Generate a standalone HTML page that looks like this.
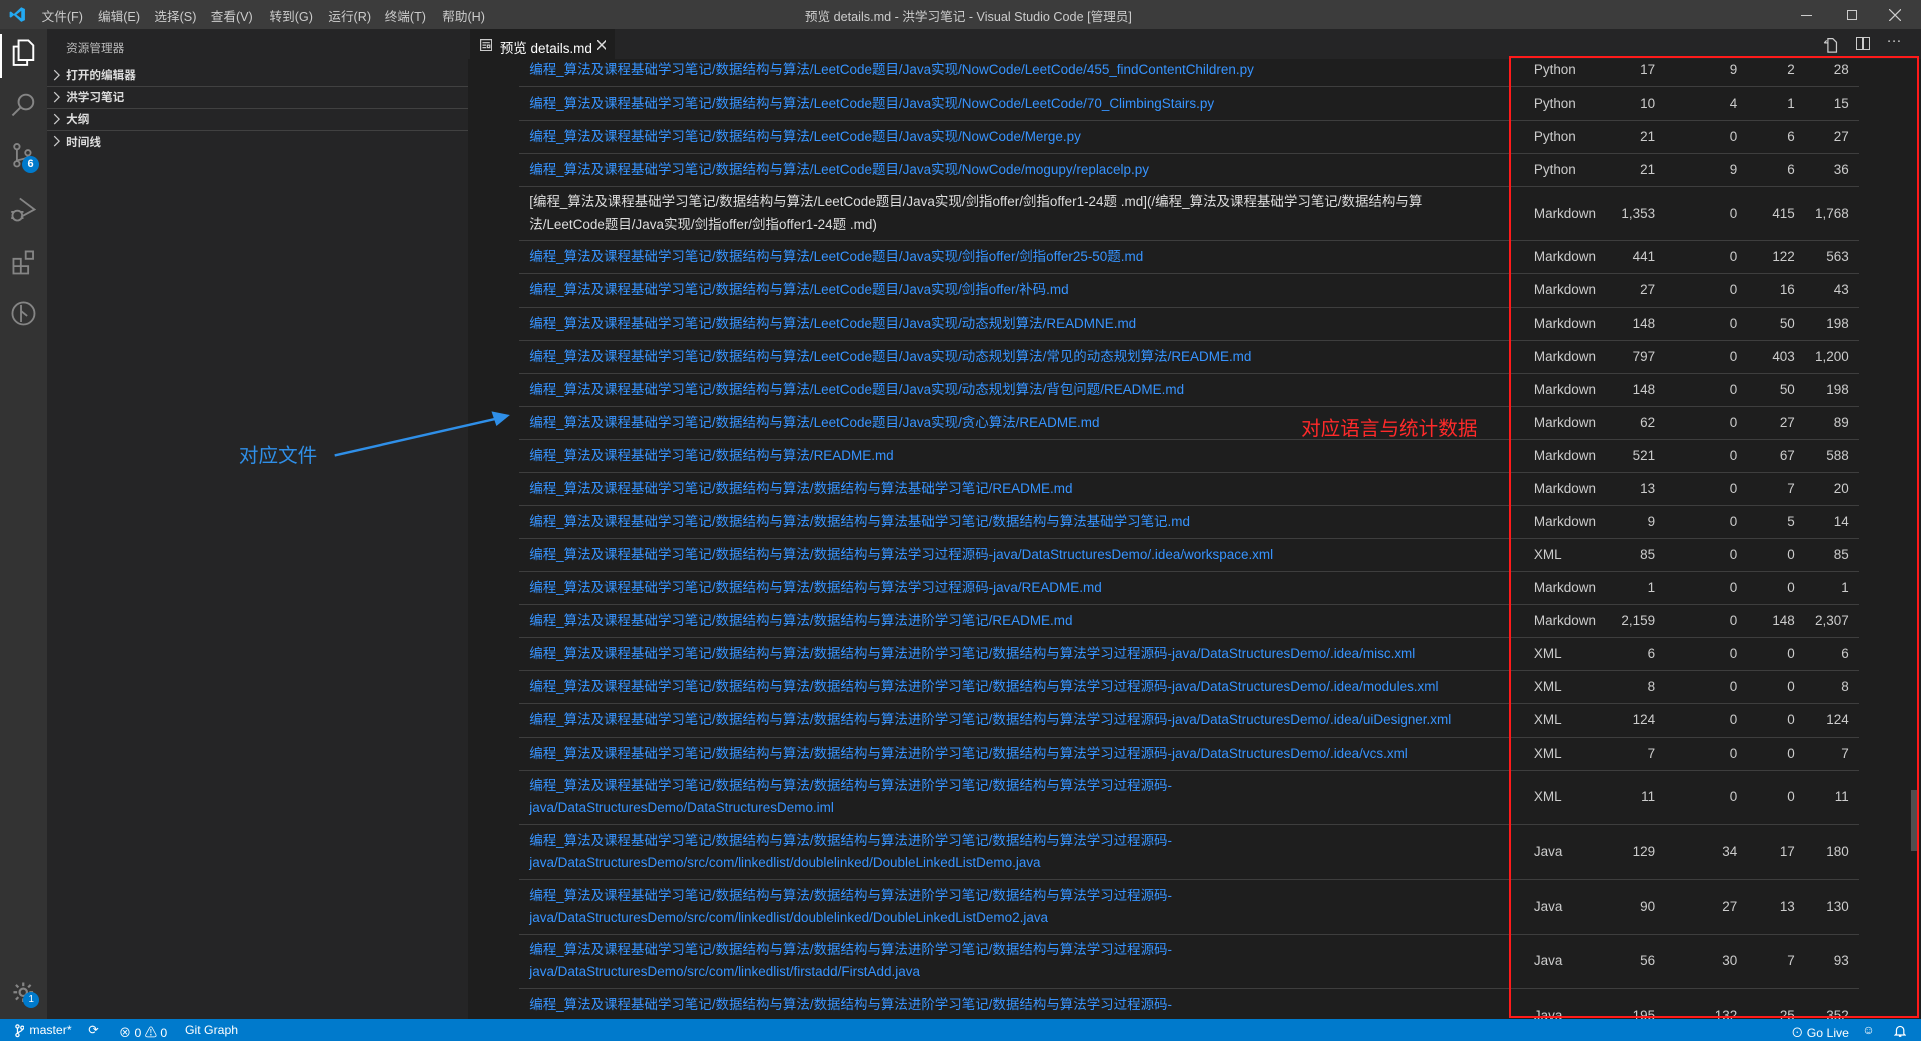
<!DOCTYPE html>
<html><head><meta charset="utf-8">
<style>
*{margin:0;padding:0;box-sizing:border-box}
html,body{width:1921px;height:1041px;overflow:hidden;background:#1e1e1e}
#w{position:relative;width:1568px;height:850px;zoom:1.22513;font-family:"Liberation Sans","Noto Sans CJK SC",sans-serif;color:#ccc;overflow:hidden}
.a{position:absolute}
#title{left:0;top:0;width:1568px;height:24px;background:#3c3c3c;font-size:10.3px;color:#ccc}
#title .m{position:absolute;top:5px}
#act{left:0;top:24px;width:38px;height:808px;background:#333}
#side{left:38px;top:24px;width:344px;height:808px;background:#252526;font-size:9.5px}
#tabs{left:382px;top:24px;width:1186px;height:24px;background:#252526}
#ed{left:382px;top:48px;width:1186px;height:784px;background:#1e1e1e;overflow:hidden}
table{position:absolute;left:42px;top:-4px;border-collapse:collapse;width:1093px;font-size:11px;table-layout:fixed}
td{border-bottom:1px solid #3e3e3e;height:27px;line-height:18px;padding:0 8px;white-space:nowrap;overflow:hidden}
td.p{color:#3794ff}
td.n{text-align:right}
tr.d td{height:44.6px}
#status{left:0;top:832px;width:1568px;height:18px;background:#007acc;color:#fff;font-size:10px}
#status span{position:absolute;top:3px}
.sec{position:absolute;left:0;width:344px;height:18px;color:#ddd;font-weight:bold}
.sec svg{position:absolute;left:5px;top:4px}
.sec i{position:absolute;left:16px;top:3px;font-style:normal}
.ln{position:absolute;left:0;width:344px;height:1px;background:#414141}
</style></head><body><div id="w">
<div id="title" class="a">
<svg class="a" style="left:7px;top:5px" width="14" height="14" viewBox="0 0 14 14"><path d="M10 1L13 2.5V11.5L10 13L4 7.5L1.5 9.5L0.5 9V5L1.5 4.5L4 6.5L10 1ZM10 4L6 7L10 10Z" fill="#23a9f2"/></svg>
<span class="m" style="left:34px">文件(F)</span><span class="m" style="left:80px">编辑(E)</span><span class="m" style="left:126px">选择(S)</span><span class="m" style="left:172px">查看(V)</span><span class="m" style="left:220px">转到(G)</span><span class="m" style="left:268px">运行(R)</span><span class="m" style="left:314px">终端(T)</span><span class="m" style="left:361px">帮助(H)</span>
<span class="m" style="left:657px">预览 details.md - 洪学习笔记 - Visual Studio Code [管理员]</span>
<div class="a" style="left:1470px;top:12px;width:9px;height:1px;background:#ccc"></div>
<div class="a" style="left:1508px;top:8px;width:8px;height:8px;border:1px solid #ccc"></div>
<svg class="a" style="left:1542px;top:7px" width="10" height="10" viewBox="0 0 10 10"><path d="M0 0L10 10M10 0L0 10" stroke="#ccc"/></svg>
</div>
<div id="act" class="a">
<div class="a" style="left:0;top:4px;width:2px;height:36px;background:#fff"></div>
<svg class="a" style="left:8px;top:7px" width="22" height="24" viewBox="0 0 22 24" fill="none" stroke="#fff" stroke-width="1.6"><path d="M7 2h8l4 4v12H7z"/><path d="M7 7H3v15h11v-4"/></svg>
<svg class="a" style="left:8px;top:50px" width="22" height="22" viewBox="0 0 22 22" fill="none" stroke="#858585" stroke-width="1.6"><circle cx="13" cy="9" r="6"/><path d="M9 13l-7 7"/></svg>
<svg class="a" style="left:10px;top:93px" width="22" height="22" viewBox="0 0 22 22" fill="none" stroke="#858585" stroke-width="1.5"><circle cx="4" cy="3" r="2.2"/><circle cx="13" cy="8" r="2.2"/><circle cx="4" cy="17" r="2.2"/><path d="M4 5v10M13 10c0 4-9 3-9 5"/></svg>
<div class="a" style="left:18px;top:103px;width:14px;height:14px;border-radius:7px;background:#007acc;color:#fff;font-size:9px;text-align:center;line-height:14px;font-weight:bold">6</div>
<svg class="a" style="left:8px;top:136px" width="22" height="22" viewBox="0 0 22 22" fill="none" stroke="#858585" stroke-width="1.5"><path d="M8 2l12 9-11 6"/><circle cx="6" cy="16" r="4"/><path d="M1 13h2M1 18h2M9 13h2M9 18h2"/></svg>
<svg class="a" style="left:9px;top:179px" width="22" height="22" viewBox="0 0 22 22" fill="none" stroke="#858585" stroke-width="1.5"><path d="M2 8h6v6H2zM2 14h6v6H2zM8 14h6v6H8zM12 2h6v6h-6z"/></svg>
<svg class="a" style="left:8px;top:221px" width="22" height="22" viewBox="0 0 22 22" fill="none" stroke="#858585" stroke-width="1.5"><circle cx="11" cy="11" r="9"/><path d="M9 4v14M9 9l5 4"/></svg>
<svg class="a" style="left:9px;top:776px" width="20" height="20" viewBox="0 0 20 20" fill="none" stroke="#858585" stroke-width="1.8"><circle cx="10" cy="10" r="3"/><path d="M10 2v3M10 15v3M2 10h3M15 10h3M4 4l2 2M14 14l2 2M4 16l2-2M14 6l2-2"/></svg>
<div class="a" style="left:19px;top:786px;width:13px;height:13px;border-radius:7px;background:#007acc;color:#fff;font-size:8px;text-align:center;line-height:13px">1</div>
</div>
<div id="side" class="a">
<span class="a" style="left:16px;top:9px;color:#bbb">资源管理器</span>
<div class="sec" style="top:28px"><svg width="6" height="10" viewBox="0 0 6 10"><path d="M1 1l4 4-4 4" stroke="#ccc" fill="none"/></svg><i>打开的编辑器</i></div>
<div class="ln" style="top:46px"></div>
<div class="sec" style="top:46px"><svg width="6" height="10" viewBox="0 0 6 10"><path d="M1 1l4 4-4 4" stroke="#ccc" fill="none"/></svg><i>洪学习笔记</i></div>
<div class="ln" style="top:64px"></div>
<div class="sec" style="top:64px"><svg width="6" height="10" viewBox="0 0 6 10"><path d="M1 1l4 4-4 4" stroke="#ccc" fill="none"/></svg><i>大纲</i></div>
<div class="ln" style="top:82px"></div>
<div class="sec" style="top:82px"><svg width="6" height="10" viewBox="0 0 6 10"><path d="M1 1l4 4-4 4" stroke="#ccc" fill="none"/></svg><i>时间线</i></div>
</div>
<div id="tabs" class="a">
<div class="a" style="left:2px;top:0;width:118px;height:24px;background:#1e1e1e;color:#fff;font-size:11px">
<svg class="a" style="left:8px;top:8px" width="10" height="10" viewBox="0 0 10 10" fill="none" stroke="#ccc"><path d="M.5.5h9v9h-9zM2 3h6M2 5h3M2 7h3M6 5h2v2H6z"/></svg><span class="a" style="left:24px;top:6px">预览 details.md</span>
<svg class="a" style="left:103px;top:9px" width="8" height="8" viewBox="0 0 8 8"><path d="M0 0L8 8M8 0L0 8" stroke="#ddd" stroke-width="1.2"/></svg></div>
<svg class="a" style="left:1106px;top:7px" width="12" height="12" viewBox="0 0 12 12" fill="none" stroke="#ccc"><path d="M4 .5h4l3 3v8H4zM1 4l2-2M1 4h3"/></svg>
<span class="a" style="left:1133px;top:6px;width:11px;height:11px;border:1.5px solid #ccc"></span><span class="a" style="left:1138px;top:6px;width:1.5px;height:11px;background:#ccc"></span>
<span class="a" style="left:1158px;top:3px;color:#ccc;font-size:12px">···</span>
</div>
<div id="ed" class="a">
<table>
<colgroup><col style="width:808px"><col style="width:74px"><col style="width:53px"><col style="width:67px"><col style="width:47px"><col style="width:44px"></colgroup>
<tr><td class="p">编程_算法及课程基础学习笔记/数据结构与算法/LeetCode题目/Java实现/NowCode/LeetCode/455_findContentChildren.py</td><td style="padding-left:20px">Python</td><td class="n">17</td><td class="n">9</td><td class="n">2</td><td class="n">28</td></tr>
<tr><td class="p">编程_算法及课程基础学习笔记/数据结构与算法/LeetCode题目/Java实现/NowCode/LeetCode/70_ClimbingStairs.py</td><td style="padding-left:20px">Python</td><td class="n">10</td><td class="n">4</td><td class="n">1</td><td class="n">15</td></tr>
<tr><td class="p">编程_算法及课程基础学习笔记/数据结构与算法/LeetCode题目/Java实现/NowCode/Merge.py</td><td style="padding-left:20px">Python</td><td class="n">21</td><td class="n">0</td><td class="n">6</td><td class="n">27</td></tr>
<tr><td class="p">编程_算法及课程基础学习笔记/数据结构与算法/LeetCode题目/Java实现/NowCode/mogupy/replacelp.py</td><td style="padding-left:20px">Python</td><td class="n">21</td><td class="n">9</td><td class="n">6</td><td class="n">36</td></tr>
<tr class="d"><td style="color:#ddd">[编程_算法及课程基础学习笔记/数据结构与算法/LeetCode题目/Java实现/剑指offer/剑指offer1-24题 .md](/编程_算法及课程基础学习笔记/数据结构与算<br>法/LeetCode题目/Java实现/剑指offer/剑指offer1-24题 .md)</td><td style="padding-left:20px">Markdown</td><td class="n">1,353</td><td class="n">0</td><td class="n">415</td><td class="n">1,768</td></tr>
<tr><td class="p">编程_算法及课程基础学习笔记/数据结构与算法/LeetCode题目/Java实现/剑指offer/剑指offer25-50题.md</td><td style="padding-left:20px">Markdown</td><td class="n">441</td><td class="n">0</td><td class="n">122</td><td class="n">563</td></tr>
<tr><td class="p">编程_算法及课程基础学习笔记/数据结构与算法/LeetCode题目/Java实现/剑指offer/补码.md</td><td style="padding-left:20px">Markdown</td><td class="n">27</td><td class="n">0</td><td class="n">16</td><td class="n">43</td></tr>
<tr><td class="p">编程_算法及课程基础学习笔记/数据结构与算法/LeetCode题目/Java实现/动态规划算法/READMNE.md</td><td style="padding-left:20px">Markdown</td><td class="n">148</td><td class="n">0</td><td class="n">50</td><td class="n">198</td></tr>
<tr><td class="p">编程_算法及课程基础学习笔记/数据结构与算法/LeetCode题目/Java实现/动态规划算法/常见的动态规划算法/README.md</td><td style="padding-left:20px">Markdown</td><td class="n">797</td><td class="n">0</td><td class="n">403</td><td class="n">1,200</td></tr>
<tr><td class="p">编程_算法及课程基础学习笔记/数据结构与算法/LeetCode题目/Java实现/动态规划算法/背包问题/README.md</td><td style="padding-left:20px">Markdown</td><td class="n">148</td><td class="n">0</td><td class="n">50</td><td class="n">198</td></tr>
<tr><td class="p">编程_算法及课程基础学习笔记/数据结构与算法/LeetCode题目/Java实现/贪心算法/README.md</td><td style="padding-left:20px">Markdown</td><td class="n">62</td><td class="n">0</td><td class="n">27</td><td class="n">89</td></tr>
<tr><td class="p">编程_算法及课程基础学习笔记/数据结构与算法/README.md</td><td style="padding-left:20px">Markdown</td><td class="n">521</td><td class="n">0</td><td class="n">67</td><td class="n">588</td></tr>
<tr><td class="p">编程_算法及课程基础学习笔记/数据结构与算法/数据结构与算法基础学习笔记/README.md</td><td style="padding-left:20px">Markdown</td><td class="n">13</td><td class="n">0</td><td class="n">7</td><td class="n">20</td></tr>
<tr><td class="p">编程_算法及课程基础学习笔记/数据结构与算法/数据结构与算法基础学习笔记/数据结构与算法基础学习笔记.md</td><td style="padding-left:20px">Markdown</td><td class="n">9</td><td class="n">0</td><td class="n">5</td><td class="n">14</td></tr>
<tr><td class="p">编程_算法及课程基础学习笔记/数据结构与算法/数据结构与算法学习过程源码-java/DataStructuresDemo/.idea/workspace.xml</td><td style="padding-left:20px">XML</td><td class="n">85</td><td class="n">0</td><td class="n">0</td><td class="n">85</td></tr>
<tr><td class="p">编程_算法及课程基础学习笔记/数据结构与算法/数据结构与算法学习过程源码-java/README.md</td><td style="padding-left:20px">Markdown</td><td class="n">1</td><td class="n">0</td><td class="n">0</td><td class="n">1</td></tr>
<tr><td class="p">编程_算法及课程基础学习笔记/数据结构与算法/数据结构与算法进阶学习笔记/README.md</td><td style="padding-left:20px">Markdown</td><td class="n">2,159</td><td class="n">0</td><td class="n">148</td><td class="n">2,307</td></tr>
<tr><td class="p">编程_算法及课程基础学习笔记/数据结构与算法/数据结构与算法进阶学习笔记/数据结构与算法学习过程源码-java/DataStructuresDemo/.idea/misc.xml</td><td style="padding-left:20px">XML</td><td class="n">6</td><td class="n">0</td><td class="n">0</td><td class="n">6</td></tr>
<tr><td class="p">编程_算法及课程基础学习笔记/数据结构与算法/数据结构与算法进阶学习笔记/数据结构与算法学习过程源码-java/DataStructuresDemo/.idea/modules.xml</td><td style="padding-left:20px">XML</td><td class="n">8</td><td class="n">0</td><td class="n">0</td><td class="n">8</td></tr>
<tr><td class="p">编程_算法及课程基础学习笔记/数据结构与算法/数据结构与算法进阶学习笔记/数据结构与算法学习过程源码-java/DataStructuresDemo/.idea/uiDesigner.xml</td><td style="padding-left:20px">XML</td><td class="n">124</td><td class="n">0</td><td class="n">0</td><td class="n">124</td></tr>
<tr><td class="p">编程_算法及课程基础学习笔记/数据结构与算法/数据结构与算法进阶学习笔记/数据结构与算法学习过程源码-java/DataStructuresDemo/.idea/vcs.xml</td><td style="padding-left:20px">XML</td><td class="n">7</td><td class="n">0</td><td class="n">0</td><td class="n">7</td></tr>
<tr class="d"><td class="p">编程_算法及课程基础学习笔记/数据结构与算法/数据结构与算法进阶学习笔记/数据结构与算法学习过程源码-<br>java/DataStructuresDemo/DataStructuresDemo.iml</td><td style="padding-left:20px">XML</td><td class="n">11</td><td class="n">0</td><td class="n">0</td><td class="n">11</td></tr>
<tr class="d"><td class="p">编程_算法及课程基础学习笔记/数据结构与算法/数据结构与算法进阶学习笔记/数据结构与算法学习过程源码-<br>java/DataStructuresDemo/src/com/linkedlist/doublelinked/DoubleLinkedListDemo.java</td><td style="padding-left:20px">Java</td><td class="n">129</td><td class="n">34</td><td class="n">17</td><td class="n">180</td></tr>
<tr class="d"><td class="p">编程_算法及课程基础学习笔记/数据结构与算法/数据结构与算法进阶学习笔记/数据结构与算法学习过程源码-<br>java/DataStructuresDemo/src/com/linkedlist/doublelinked/DoubleLinkedListDemo2.java</td><td style="padding-left:20px">Java</td><td class="n">90</td><td class="n">27</td><td class="n">13</td><td class="n">130</td></tr>
<tr class="d"><td class="p">编程_算法及课程基础学习笔记/数据结构与算法/数据结构与算法进阶学习笔记/数据结构与算法学习过程源码-<br>java/DataStructuresDemo/src/com/linkedlist/firstadd/FirstAdd.java</td><td style="padding-left:20px">Java</td><td class="n">56</td><td class="n">30</td><td class="n">7</td><td class="n">93</td></tr>
<tr class="d"><td class="p">编程_算法及课程基础学习笔记/数据结构与算法/数据结构与算法进阶学习笔记/数据结构与算法学习过程源码-<br>java/DataStructuresDemo/src/com/linkedlist/firstadd/FirstAdd2.java</td><td style="padding-left:20px">Java</td><td class="n">195</td><td class="n">132</td><td class="n">25</td><td class="n">352</td></tr>
</table>
<div class="a" style="left:1178px;top:597px;width:6px;height:50px;background:#4f4f4f"></div>
</div>
<div class="a" style="left:1232px;top:46px;width:334px;height:785px;border:2px solid #ff1a1a"></div>
<div class="a" style="left:1062px;top:336px;color:#ff2a2a;font-size:16px">对应语言与统计数据</div>
<div class="a" style="left:195px;top:358px;color:#2f8fe8;font-size:16px">对应文件</div>
<svg class="a" style="left:270px;top:330px" width="150" height="50" viewBox="0 0 150 50"><path d="M3 42L135 12" stroke="#2f8fe8" stroke-width="2"/><path d="M146 9L131 6L135 18Z" fill="#2f8fe8"/></svg>
<div id="status" class="a">
<svg class="a" style="left:12px;top:4px" width="8" height="11" viewBox="0 0 8 11" fill="none" stroke="#fff"><circle cx="2" cy="2" r="1.3"/><circle cx="2" cy="9" r="1.3"/><circle cx="6" cy="3" r="1.3"/><path d="M2 3.3v4.4M6 4.3c0 2-4 2-4 3.4"/></svg>
<span style="left:24px">master*</span><span style="left:72px">⟳</span><span style="left:97px">⊗ 0 ⚠ 0</span><span style="left:151px">Git Graph</span>
<span style="left:1462px">⊙ Go Live</span><span style="left:1520px">☺</span>
<svg class="a" style="left:1546px;top:4px" width="10" height="11" viewBox="0 0 10 11" fill="none" stroke="#fff"><path d="M2 8V5a3 3 0 016 0v3l1 1H1zM4 10h2"/></svg>
</div>
</div></body></html>
